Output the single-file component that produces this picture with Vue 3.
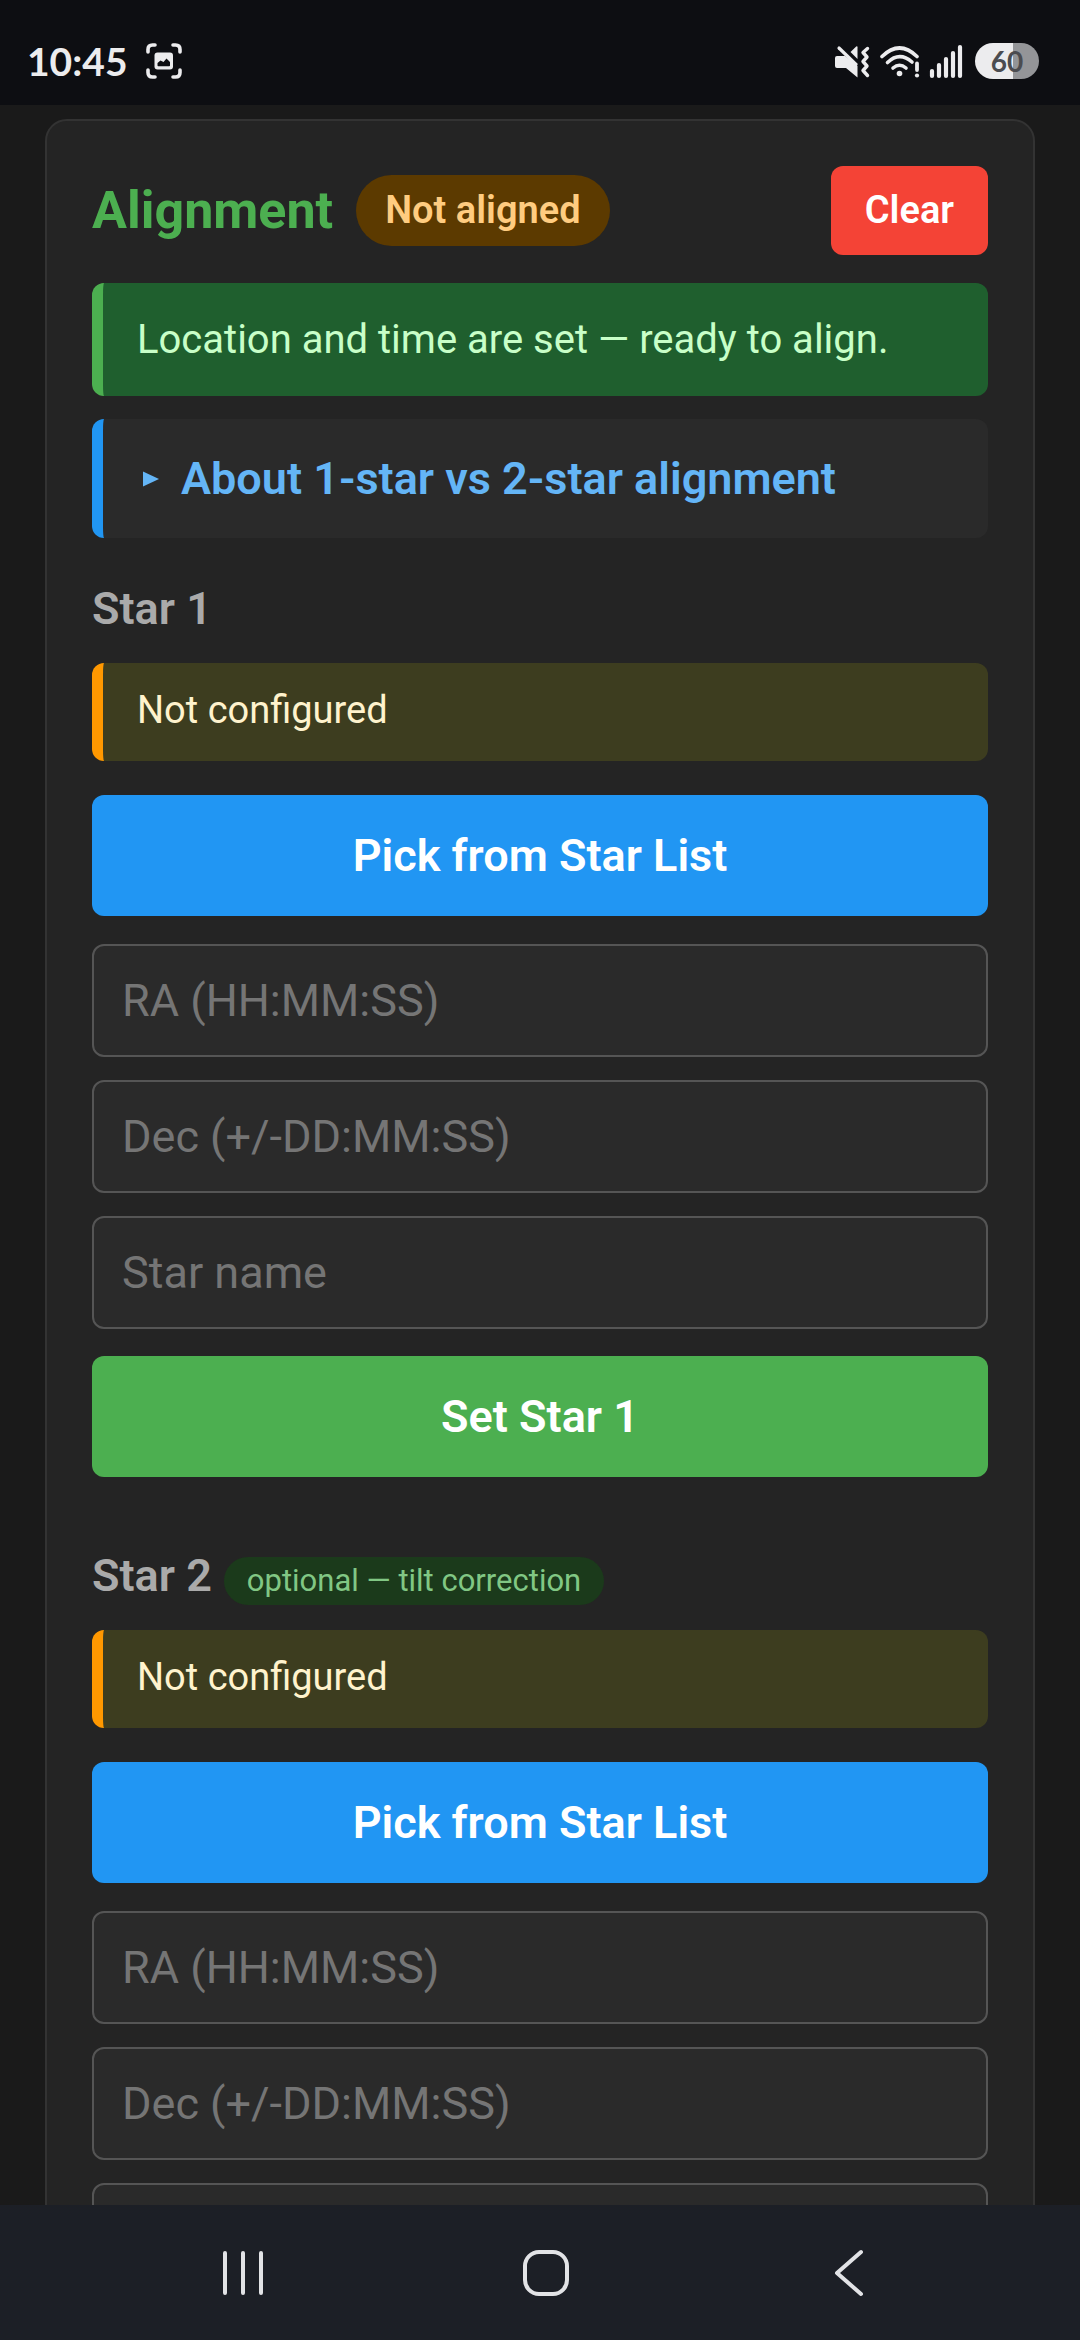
<!-- eslint-disable vue/multi-word-component-names -->
<script setup>
    import { reactive } from "vue"

    const stars = reactive([
        { id: 1, note: '', status: 'Not configured', ra: '', dec: '', name: '' },
        { id: 2, note: 'optional — tilt correction', status: 'Not configured', ra: '', dec: '', name: '' }
    ])

    function clearStars() {
        stars.forEach((star) => {
            star.ra = ''
            star.dec = ''
            star.name = ''
            star.status = 'Not configured'
        })
    }

    function setStar(star) {
        star.status = star.name || `${star.ra} ${star.dec}`
    }
</script>

<template>
    <div class="screen">
        <header class="status-bar">
            <div class="status-group left">
                <span class="clock">10:45</span>
                <svg class="capture-icon" width="36" height="36" viewBox="0 0 36 36" aria-hidden="true">
                    <g fill="none" stroke="#ececee" stroke-width="3.6" stroke-linecap="round">
                        <path d="M2 9V6.500Q2 2 6.500 2H9" />
                        <path d="M27 2h2.500Q34 2 34 6.500V9" />
                        <path d="M34 27v2.500Q34 34 29.500 34H27" />
                        <path d="M9 34H6.500Q2 34 2 29.500V27" />
                    </g>
                    <rect x="8.500" y="9.500" width="18.500" height="17" rx="3" fill="#ececee" />
                    <path d="M11.500 22.500v-2.500l3-2.500 3 1.500 3-3.500 3.500 3.500v3.500q0 .8-.8.8H12.300q-.8 0-.8-.8z" fill="#0d0e12" />
                </svg>
            </div>
            <div class="status-group right">
                <svg width="38" height="36" viewBox="0 0 38 36" aria-hidden="true">
                    <path d="M2 15q0-2 2-2h8L24.500 23v11.500L13 25H4q-2 0-2-2z" fill="#ececee" />
                    <path d="M17.500 9L23.200 3.600Q24.500 2.800 24.500 4.300V16z" fill="#ececee" />
                    <path d="M6 5l17 16.500" stroke="#ececee" stroke-width="3.2" stroke-linecap="round" />
                    <path d="M34.500 5.500l-4.500 4 4 4.500-4 4.500 4 4.500-4 4.500 4.500 5" fill="none" stroke="#ececee" stroke-width="3.400" stroke-linecap="round" stroke-linejoin="round" />
                </svg>
                <svg width="41" height="36" viewBox="0 0 41 36" aria-hidden="true">
                    <g fill="none" stroke="#ececee" stroke-width="3.6" stroke-linecap="round">
                        <path d="M3 13.500Q20.500-3.500 38 13.500" />
                        <path d="M8.500 19.500Q20.500 8 33 19" />
                        <path d="M14 25Q20.500 19.500 27 25" />
                    </g>
                    <circle cx="20.500" cy="30.500" r="2.800" fill="#ececee" />
                    <path d="M38 20.500v6.500" stroke="#ececee" stroke-width="3.8" stroke-linecap="round" />
                    <circle cx="38" cy="32.500" r="2.100" fill="#ececee" />
                </svg>
                <svg width="36" height="36" viewBox="0 0 36 36" aria-hidden="true">
                    <g stroke="#ececee" stroke-width="4.2" stroke-linecap="round">
                        <path d="M4 28v5M11 22v11M18 16v17M25 10v23M32 4v29" />
                    </g>
                </svg>
                <span class="battery">60</span>
            </div>
        </header>

        <main class="content">
            <section class="card">
                <div class="card-header">
                    <h2 class="card-title">Alignment</h2>
                    <span class="badge">Not aligned</span>
                    <button class="btn-clear" type="button" @click="clearStars">Clear</button>
                </div>
                <div class="notice success">Location and time are set — ready to align.</div>
                <details class="about">
                    <summary>
                        <svg width="16" height="16" viewBox="0 0 16 16" aria-hidden="true">
                            <path d="M0 0.500L16 8L0 15.500z" fill="#64b5f6" />
                        </svg>
                        About 1-star vs 2-star alignment
                    </summary>
                </details>

                <form class="star" v-for="star in stars" :key="star.id" @submit.prevent="setStar(star)">
                    <h3 class="star-title">
                        Star {{ star.id }}
                        <span v-if="star.note" class="star-note">{{ star.note }}</span>
                    </h3>
                    <div class="notice warning">{{ star.status }}</div>
                    <button class="btn btn-pick" type="button">Pick from Star List</button>
                    <div class="fields">
                        <input v-model="star.ra" type="text" placeholder="RA (HH:MM:SS)" aria-label="RA (HH:MM:SS)">
                        <input v-model="star.dec" type="text" placeholder="Dec (+/-DD:MM:SS)" aria-label="Dec (+/-DD:MM:SS)">
                        <input v-model="star.name" type="text" placeholder="Star name" aria-label="Star name">
                    </div>
                    <!-- an optional star can only be set once it has coordinates -->
                    <button v-if="!star.note || star.ra" class="btn btn-set" type="submit">Set Star {{ star.id }}</button>
                </form>
            </section>
        </main>

        <nav class="nav-bar">
            <button type="button" aria-label="Recent apps">
                <svg width="48" height="48" viewBox="0 0 48 48">
                    <path d="M6 4v40M24 4v40M42 4v40" stroke="#e2e3e6" stroke-width="4" stroke-linecap="round" />
                </svg>
            </button>
            <button type="button" aria-label="Home">
                <svg width="48" height="48" viewBox="0 0 48 48">
                    <rect x="3" y="3" width="42" height="42" rx="14" fill="none" stroke="#e2e3e6" stroke-width="4" />
                </svg>
            </button>
            <button type="button" aria-label="Back">
                <svg width="48" height="48" viewBox="0 0 48 48">
                    <path d="M36 3L12 24L36 45" fill="none" stroke="#e2e3e6" stroke-width="4" stroke-linecap="round" stroke-linejoin="round" />
                </svg>
            </button>
        </nav>
    </div>
</template>

<style>
    body {
        margin: 0;
        background: #1a1a1a;
    }
</style>

<style scoped>
    .screen {
        display: flex;
        flex-direction: column;
        height: 100vh;
        font-family: Roboto, "Liberation Sans", sans-serif;
        font-size: 45px;
        color: #fff;
        background: #1a1a1a;
    }
    * {
        box-sizing: border-box;
    }
    button, input {
        font-family: inherit;
        margin: 0;
    }

    /* Status bar */
    .status-bar {
        display: flex;
        justify-content: space-between;
        align-items: center;
        flex: none;
        height: 105px;
        padding: 17px 41px 0 27px;
        background: #0d0e12;
    }
    .status-group {
        display: flex;
        align-items: center;
    }
    .status-group.left {
        gap: 18px;
    }
    .status-group.right {
        gap: 8px;
    }
    .clock {
        font-family: Lato, sans-serif;
        font-size: 39px;
        font-weight: 700;
        line-height: 40px;
        color: #ececee;
    }
    .battery {
        width: 64px;
        margin-left: 3px;
        border-radius: 18px;
        font-family: Lato, sans-serif;
        font-size: 28px;
        font-weight: 700;
        line-height: 36px;
        text-align: center;
        color: #4b4c50;
        background: linear-gradient(to right, #ececee 60%, #949598 60%);
    }

    /* Card */
    .content {
        flex: 1;
        min-height: 0;
        overflow: hidden;
        padding: 14px 45px 0;
    }
    .card {
        padding: 45px;
        border: 2px solid #333;
        border-radius: 22px;
        background: #242424;
    }
    .card-header {
        display: flex;
        align-items: center;
        gap: 23px;
        margin-bottom: 28px;
    }
    .card-title {
        margin: 0;
        font-size: 52px;
        font-weight: 700;
        line-height: 64px;
        color: #4caf50;
    }
    .badge {
        padding: 0 29px;
        border-radius: 36px;
        font-size: 38px;
        font-weight: 600;
        line-height: 71px;
        color: #ffcc80;
        background: #5c3a00;
    }
    .btn-clear {
        margin-left: auto;
        padding: 0 34px;
        border: none;
        border-radius: 12px;
        font-size: 38px;
        font-weight: 600;
        line-height: 89px;
        color: #fff;
        background: #f44336;
    }
    .notice {
        padding: 28px 34px;
        border-left: 11px solid;
        border-radius: 12px;
    }
    .notice.success {
        margin-bottom: 23px;
        font-size: 40px;
        line-height: 57px;
        color: #c8ffc8;
        border-color: #4caf50;
        background: #1f5f2e;
    }
    .notice.warning {
        padding: 21px 34px 25px;
        font-size: 38px;
        line-height: 52px;
        color: #fff3cd;
        border-color: #ff9800;
        background: #3d3d1f;
    }
    .about {
        padding: 0 40px;
        border-left: 11px solid #2196f3;
        border-radius: 12px;
        background: #2a2a2a;
    }
    .about summary {
        display: flex;
        align-items: center;
        gap: 22px;
        font-weight: 600;
        line-height: 119px;
        color: #64b5f6;
        cursor: pointer;
    }

    /* Star forms */
    .star {
        padding-top: 44px;
    }
    .star + .star {
        padding-top: 72px;
    }
    .star-title {
        display: flex;
        align-items: center;
        gap: 12px;
        height: 54px;
        margin: 0 0 27px;
        font-size: 45px;
        font-weight: 600;
        line-height: 54px;
        color: #aaa;
    }
    .star-note {
        margin-top: 10px;
        padding: 0 23px;
        border-radius: 24px;
        font-size: 31px;
        font-weight: 400;
        line-height: 48px;
        color: #81c784;
        background: #1b3a1b;
    }
    .btn {
        display: block;
        width: 100%;
        padding: 0;
        border: none;
        border-radius: 12px;
        font-size: 45px;
        font-weight: 600;
        line-height: 121px;
        color: #fff;
    }
    .btn-pick {
        margin-top: 34px;
        background: #2196f3;
    }
    .btn-set {
        background: #4caf50;
    }
    .fields {
        display: flex;
        flex-direction: column;
        gap: 23px;
        margin: 28px 0 27px;
    }
    .fields input {
        width: 100%;
        height: 113px;
        padding: 0 28px;
        border: 2px solid #555;
        border-radius: 12px;
        font-size: 45px;
        color: #fff;
        background: #2a2a2a;
    }
    .fields input::placeholder {
        color: #757575;
    }

    /* Navigation bar */
    .nav-bar {
        display: flex;
        justify-content: space-between;
        flex: none;
        padding: 44px 207px 43px 219px;
        background: #1c1f26;
    }
    .nav-bar button {
        display: flex;
        padding: 0;
        border: none;
        background: none;
    }
</style>
